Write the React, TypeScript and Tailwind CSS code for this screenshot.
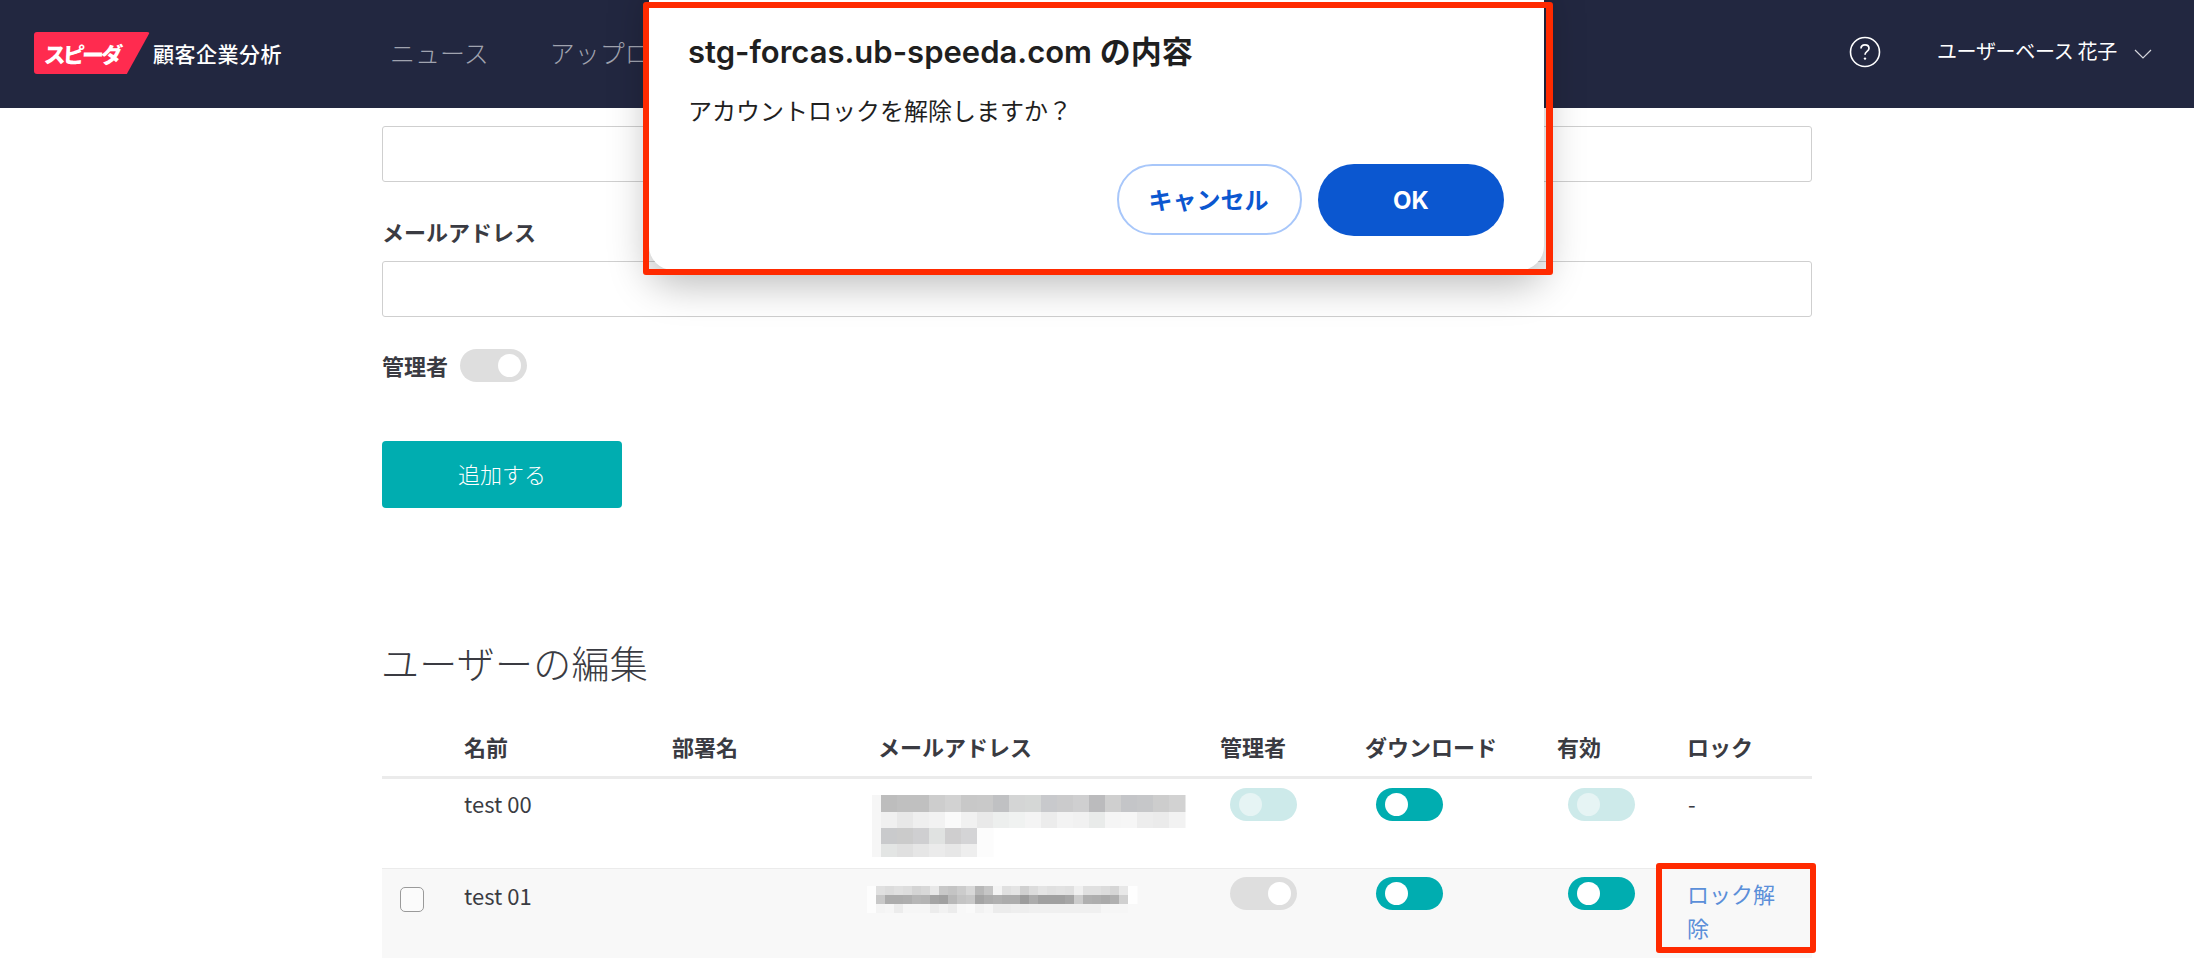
import React from "react";

const jp = "font-['Noto_Sans_CJK_JP','Noto_Sans',sans-serif]";

function Toggle({ kind }: { kind: "on" | "pale" | "off" }) {
  const track =
    kind === "on"
      ? "bg-[#00adb0] justify-start pl-[9px]"
      : kind === "pale"
        ? "bg-[#cdeaea] justify-start pl-[9px]"
        : "bg-[#dedede] justify-end pr-[6px]";
  const knob = kind === "pale" ? "bg-[#e6f4f4]" : "bg-white";
  return (
    <div className={`flex h-[33px] w-[67px] items-center rounded-full ${track}`}>
      <div className={`h-[23px] w-[23px] rounded-full ${knob}`} />
    </div>
  );
}

type Row = { c: string[]; h: number };

function Pixels({ rows, cell, width, lead, className }: { rows: Row[]; cell: number; width: number; lead: string; className?: string }) {
  let y = 0;
  const total = rows.reduce((a, r) => a + r.h, 0);
  return (
    <svg width={width} height={total} className={className}>
      <rect x={0} y={0} width={9} height={total} fill={lead} />
      {rows.map((r, i) => {
        const top = y;
        y += r.h;
        return r.c.map((f, j) => <rect key={`${i}-${j}`} x={9 + j * cell} y={top} width={cell + 0.5} height={r.h} fill={f} />);
      })}
    </svg>
  );
}

const email0: Row[] = [
  { h: 17, c: ["#bdbdbd", "#c0c0c0", "#c0c0c0", "#cdcdcd", "#d2d2d2", "#c8c8c8", "#c9c9c9", "#c0c1c3", "#d4d5d5", "#d5d7d6", "#c8c9cc", "#cbcbcc", "#cfcfd0", "#bbbbbd", "#cfcfcf", "#c4c5c8", "#c6c7c9", "#cdcdcd", "#d2d2d2"] },
  { h: 16, c: ["#f0f0f0", "#e8e8e8", "#efefef", "#f2f2f2", "#fafafa", "#f1f1f1", "#e9e9e9", "#edefee", "#f0f2f1", "#f4f4f4", "#ececec", "#f3f3f3", "#f1f1f1", "#e9ebea", "#f5f5f5", "#f6f6f6", "#ededed", "#ebebeb", "#f2f2f2"] },
  { h: 16, c: ["#c9cacc", "#cbcbcb", "#cfcfd1", "#e0e2e1", "#cfcecf", "#d4d4d6", "#fcfcfc"] },
  { h: 13, c: ["#e3e5e4", "#e0e0e0", "#e6e6e6", "#ebebeb", "#e7e7e7", "#eeeeee", "#fcfcfc"] },
];

const g = (s: string) => s.split(",").map((v) => `#${v}${v}${v}`);
const email1: Row[] = [
  { h: 9, c: g("e0,dc,e0,dd,d4,d8,e8,c8,c4,cc,d8,b8,c6,f4,e0,e4,d0,dc,e4,e0,e2,e0,f0,e0,e0,dc,d6,e8,fe") },
  { h: 9, c: g("c8,ac,ac,ae,b6,b4,a4,a0,b8,c4,c8,a4,ac,b0,ac,ac,9c,ac,a0,a0,a0,a6,cc,b0,ae,aa,b0,d0,fe") },
  { h: 9, c: g("f4,f6,ec,f6,f6,f6,ec,f2,ec,f8,fa,f2,f6,ec,ec,ee,ee,f0,f0,f0,f0,f0,f0,f0,f0,f6,f6,f6,f8") },
];

export default function App() {
  return (
    <div className={`relative h-[958px] w-full overflow-hidden bg-white text-[#3a3b42] ${jp}`}>
      <header className="flex h-[108px] items-center bg-[#222740] pl-[34px] pr-[42px]">
        <div className="-mt-[2px] flex h-[42px] w-[116px] items-center rounded-[3px] bg-[#ff2b4f] pl-[10px] text-[22px] font-black leading-none tracking-[-3px] text-white [clip-path:polygon(0_0,100%_0,80%_100%,0_100%)]">
          <span className="-skew-x-3">スピーダ</span>
        </div>
        <div className="ml-[3px] -mt-[2px] text-[21px] font-medium leading-none tracking-[0.5px] text-white">顧客企業分析</div>
        <nav className="ml-[108px] -mt-[2px] flex gap-[61px] text-[25px] font-light text-[#a0a3af]">
          <span>ニュース</span>
          <span>アップロード</span>
        </nav>
        <div className="ml-auto flex items-center">
          <svg width="32" height="32" viewBox="0 0 32 32" fill="none" className="-mt-[5px]">
            <circle cx="16" cy="16" r="14.5" stroke="white" strokeWidth="1.6" />
            <path d="M12 12.6c0-2.4 1.8-3.8 4-3.8s4 1.4 4 3.5c0 3.2-4 3-4 6.4" stroke="white" strokeWidth="1.7" fill="none" />
            <circle cx="16" cy="22.6" r="1.2" fill="white" />
          </svg>
          <span className="ml-[56px] -mt-[6px] text-[20px] font-normal leading-none tracking-[-0.3px] text-white">ユーザーベース 花子</span>
          <svg width="18" height="10" viewBox="0 0 18 10" fill="none" className="ml-[17px] -mt-[1px]">
            <path d="M1 1l8 8 8-8" stroke="#d5d6dc" strokeWidth="1.2" />
          </svg>
        </div>
      </header>

      <main className="mx-auto w-[1430px]">
        <div className="mt-[18px] h-[56px] rounded-[3px] border border-[#cfcfcf]" />
        <div className="mt-[33px] text-[22px] font-bold leading-[32px]">メールアドレス</div>
        <div className="mt-[14px] h-[56px] rounded-[3px] border border-[#cfcfcf]" />
        <div className="mt-[32px] flex items-center">
          <span className="text-[22px] font-bold leading-[33px]">管理者</span>
          <div className="ml-[12px]">
            <Toggle kind="off" />
          </div>
        </div>
        <button className="mt-[59px] flex h-[67px] w-[240px] items-center justify-center rounded-[4px] bg-[#00adb0] pb-[3px] text-[22px] font-light text-white">
          追加する
        </button>

        <h2 className="-ml-[1px] mt-[129px] text-[38px] font-light leading-[50px] tracking-[0.25px]">ユーザーの編集</h2>

        <table className="mt-[44px] w-[1430px] table-fixed border-collapse text-left text-[22px]">
          <colgroup>
            <col className="w-[67px]" />
            <col className="w-[207px]" />
            <col className="w-[208px]" />
            <col className="w-[340px]" />
            <col className="w-[146px]" />
            <col className="w-[191px]" />
            <col className="w-[131px]" />
            <col className="w-[140px]" />
          </colgroup>
          <thead>
            <tr className="h-[46px] border-b-[3px] border-[#ebebeb] align-top leading-[30px]">
              <th />
              <th className="pl-[15px] font-bold">名前</th>
              <th className="pl-[16px] font-bold">部署名</th>
              <th className="pl-[14px] font-bold">メールアドレス</th>
              <th className="pl-[16px] font-bold">管理者</th>
              <th className="pl-[15px] font-bold">ダウンロード</th>
              <th className="pl-[16px] font-bold">有効</th>
              <th className="pl-[15px] font-bold">ロック</th>
            </tr>
          </thead>
          <tbody>
            <tr className="h-[91px] border-b border-[#ebebeb] align-top">
              <td />
              <td className="pl-[15px] pt-[9px] leading-[30px]">test 00</td>
              <td />
              <td className="pt-[16px]">
                <Pixels rows={email0} cell={16} width={330} lead="#f6f6f6" className="ml-[8px]" />
              </td>
              <td className="pl-[26px] pt-[9px]">
                <Toggle kind="pale" />
              </td>
              <td className="pl-[26px] pt-[9px]">
                <Toggle kind="on" />
              </td>
              <td className="pl-[27px] pt-[9px]">
                <Toggle kind="pale" />
              </td>
              <td className="pl-[16px] pt-[9px] leading-[30px]">-</td>
            </tr>
            <tr className="h-[90px] bg-[#f8f8f8] align-top">
              <td className="pl-[18px] pt-[18px]">
                <div className="h-[25px] w-[24px] rounded-[5px] border border-[#9a9a9a] bg-[#fbfbfb]" />
              </td>
              <td className="pl-[15px] pt-[11px] leading-[30px]">test 01</td>
              <td />
              <td className="pt-[17px]">
                <Pixels rows={email1} cell={9} width={280} lead="#fdfdfd" className="ml-[3px]" />
              </td>
              <td className="pl-[26px] pt-[8px]">
                <Toggle kind="off" />
              </td>
              <td className="pl-[26px] pt-[8px]">
                <Toggle kind="on" />
              </td>
              <td className="pl-[27px] pt-[8px]">
                <Toggle kind="on" />
              </td>
              <td className="pl-[15px] pr-[16px] pt-[7px] font-normal leading-[34px] text-[#5b8fd9]">ロック解除</td>
            </tr>
          </tbody>
        </table>
      </main>

      {/* browser confirm dialog */}
      <div className="absolute -top-[20px] left-[649px] flex h-[290px] w-[895px] flex-col rounded-b-[24px] bg-white pl-[39px] pr-[40px] pt-[52px] font-['Inter','Noto_Sans_CJK_JP',sans-serif] shadow-[0_14px_40px_rgba(0,0,0,0.28)]">
        <div className="text-[31px] font-semibold leading-[40px] text-[#1f1f1f]">stg-forcas.ub-speeda.com の内容</div>
        <div className="mt-[23px] text-[24px] leading-[34px] text-[#1f1f1f]">アカウントロックを解除しますか？</div>
        <div className="mt-[35px] flex justify-end gap-[16px]">
          <button className="h-[71px] w-[185px] rounded-full border-2 border-[#a8c7fa] bg-white pt-[2px] pr-[2px] text-[24px] font-bold text-[#0b57d0]">キャンセル</button>
          <button className="h-[72px] w-[186px] rounded-full bg-[#0b57d0] pt-[2px] text-[24px] font-bold text-white">OK</button>
        </div>
      </div>
      <div className="absolute left-[643px] top-[2px] h-[273px] w-[910px] rounded-[3px] border-y-[6px] border-l-[6px] border-r-[7px] border-[#ff2a00]" />
      <div className="absolute left-[1656px] top-[863px] h-[90px] w-[160px] rounded-[3px] border-[6px] border-[#ff2a00]" />
    </div>
  );
}
